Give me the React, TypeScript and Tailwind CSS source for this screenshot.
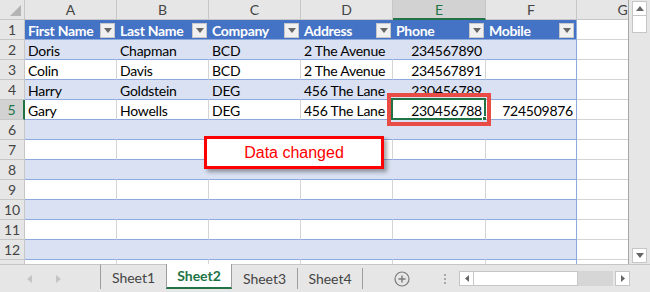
import React from "react";

const font = { fontFamily: "Lato, 'Open Sans', sans-serif" };

const cols = [
  { key: "A", w: "w-[92px]" },
  { key: "B", w: "w-[92px]" },
  { key: "C", w: "w-[92px]" },
  { key: "D", w: "w-[92px]" },
  { key: "E", w: "w-[93px]" },
  { key: "F", w: "w-[91px]" },
  { key: "G", w: "w-[92px]" },
];

const header = ["First Name", "Last Name", "Company", "Address", "Phone", "Mobile"];

const data: string[][] = [
  ["Doris", "Chapman", "BCD", "2 The Avenue", "234567890", ""],
  ["Colin", "Davis", "BCD", "2 The Avenue", "234567891", ""],
  ["Harry", "Goldstein", "DEG", "456 The Lane", "230456789", ""],
  ["Gary", "Howells", "DEG", "456 The Lane", "230456788", "724509876"],
];

const numeric = [4, 5];

function FilterButton() {
  return (
    <span className="ml-auto mr-[2px] flex h-[15px] w-[15px] shrink-0 items-center justify-center border border-[#c8c8c8] bg-[#f0f0f0]">
      <svg width="8" height="5" viewBox="0 0 8 5">
        <path d="M0 0h8L4 5z" fill="#666" />
      </svg>
    </span>
  );
}

function RowHeader({ n, selected }: { n?: number; selected?: boolean }) {
  return (
    <div
      className={
        selected
          ? "flex h-[20px] w-[25px] shrink-0 items-center justify-center border-b border-r-2 border-b-[#c6c6c6] border-r-[#217346] bg-[#d2d2d2] text-[14px] text-[#217346]"
          : "flex h-[20px] w-[25px] shrink-0 items-center justify-center border-b border-r border-[#c6c6c6] bg-[#e6e6e6] text-[14px] text-[#444]"
      }
    >
      {n}
    </div>
  );
}

function TableRow({ n, cells }: { n: number; cells: string[] }) {
  const banded = n % 2 === 0;
  return (
    <div className="flex h-[20px]">
      <RowHeader n={n < 13 ? n : undefined} selected={n === 5} />
      {cols.slice(0, 6).map((c, i) => {
        const last = i === 5;
        const border = last
          ? "border-r-[#8ea9db]"
          : banded
            ? "border-r-[#d9e1f2]"
            : "border-r-[#d4d4d4]";
        return (
          <div
            key={c.key}
            className={`relative flex shrink-0 items-center whitespace-nowrap border-b border-r border-b-[#8ea9db] ${border} ${c.w} ${
              banded ? "bg-[#d9e1f2]" : "bg-white"
            } ${numeric.includes(i) ? "justify-end pr-[3px]" : "pl-[3px]"} pt-[1px] text-[14px] tracking-[-0.25px] text-black`}
          >
            {cells[i] ?? ""}
            {n === 5 && i === 4 && (
              <div className="absolute -left-[2px] -top-[2px] h-[22px] w-[95px] border-2 border-[#217346]">
                <div className="absolute -bottom-[4px] -right-[4px] h-[6px] w-[6px] border border-white bg-[#217346]" />
              </div>
            )}
          </div>
        );
      })}
      <div className="h-[20px] w-[92px] shrink-0 border-b border-r border-[#d4d4d4] bg-white" />
    </div>
  );
}

export default function App() {
  const rows = Array.from({ length: 12 }, (_, i) => i + 2);
  return (
    <div className="relative h-[292px] w-[650px] overflow-hidden bg-[#e6e6e6]" style={font}>
      <div className="flex h-[264px]">
        <div className="h-[264px] w-[629px] shrink-0 overflow-hidden border-r border-[#a6a6a6] bg-white">
          {/* column headers */}
          <div className="flex h-[20px]">
            <div className="relative h-[20px] w-[25px] shrink-0 border-b border-r border-[#c6c6c6] bg-[#e6e6e6]">
              <svg className="absolute bottom-[3px] right-[3px]" width="11" height="11" viewBox="0 0 11 11">
                <path d="M11 0v11H0z" fill="#b4b4b4" />
              </svg>
            </div>
            {cols.map((c) => (
              <div
                key={c.key}
                className={
                  c.key === "E"
                    ? `flex shrink-0 items-center justify-center border-b-2 border-r border-b-[#217346] border-r-[#c6c6c6] bg-[#d2d2d2] text-[14px] text-[#217346] ${c.w}`
                    : `flex shrink-0 items-center justify-center border-b border-r border-[#c6c6c6] bg-[#e6e6e6] text-[14px] text-[#444] ${c.w}`
                }
              >
                {c.key}
              </div>
            ))}
          </div>

          {/* table header row */}
          <div className="flex h-[20px]">
            <RowHeader n={1} />
            {header.map((h, i) => (
              <div
                key={h}
                className={`flex shrink-0 items-center whitespace-nowrap border-b border-[#8ea9db] bg-[#4472c4] pl-[3px] pt-[1px] text-[14px] font-bold tracking-[-0.3px] text-white ${cols[i].w} ${
                  i === 5 ? "border-r" : ""
                }`}
              >
                {h}
                <FilterButton />
              </div>
            ))}
            <div className="h-[20px] w-[92px] shrink-0 border-b border-r border-[#d4d4d4] bg-white" />
          </div>

          {rows.map((n) => (
            <TableRow key={n} n={n} cells={data[n - 2] ?? []} />
          ))}
        </div>

        {/* vertical scrollbar */}
        <div className="flex w-[21px] flex-col items-center justify-between py-[1px] pl-[3px] pr-[3px]">
          <div className="flex flex-col">
            <div className="flex h-[15px] w-[15px] items-center justify-center border border-[#c6c6c6] bg-white">
              <svg width="8" height="5" viewBox="0 0 8 5">
                <path d="M4 0l4 5H0z" fill="#666" />
              </svg>
            </div>
            <div className="h-[17px] w-[15px] border border-t-0 border-[#c6c6c6] bg-white" />
          </div>
          <div className="flex h-[15px] w-[15px] items-center justify-center border border-[#c6c6c6] bg-white">
            <svg width="8" height="5" viewBox="0 0 8 5">
              <path d="M0 0h8L4 5z" fill="#666" />
            </svg>
          </div>
        </div>
      </div>

      {/* sheet tabs */}
      <div className="flex h-[28px] items-start text-[14px]">
        <div className="flex h-[28px] w-[100px] items-center border-t border-[#c6c6c6]">
          <svg className="ml-[27px]" width="5" height="8" viewBox="0 0 5 8">
            <path d="M5 0v8L0 4z" fill="#c4c4c4" />
          </svg>
          <svg className="ml-[24px]" width="5" height="8" viewBox="0 0 5 8">
            <path d="M0 0v8l5-4z" fill="#c4c4c4" />
          </svg>
        </div>
        <div className="flex h-[25px] w-[66px] items-center justify-center border-l border-t border-[#9d9d9d] border-t-[#c6c6c6] text-[#444]">
          Sheet1
        </div>
        <div className="flex h-[25px] w-[66px] items-center justify-center border-b-2 border-l border-r border-[#9d9d9d] border-b-[#217346] bg-white font-bold text-[#217346]">
          Sheet2
        </div>
        <div className="flex h-[28px] w-[65px] items-center justify-center border-t border-[#c6c6c6] text-[#444]">
          Sheet3
        </div>
        <div className="flex h-[28px] items-start border-t border-[#c6c6c6]">
          <div className="mt-[3px] h-[21px] w-px bg-[#9d9d9d]" />
        </div>
        <div className="flex h-[28px] w-[64px] items-center justify-center border-t border-[#c6c6c6] text-[#444]">
          Sheet4
        </div>
        <div className="flex h-[28px] items-start border-t border-[#c6c6c6]">
          <div className="mt-[3px] h-[21px] w-px bg-[#9d9d9d]" />
        </div>
        <div className="flex h-[28px] flex-1 items-center border-t border-[#c6c6c6]">
          <svg className="ml-[31px]" width="16" height="16" viewBox="0 0 16 16">
            <circle cx="8" cy="8" r="7" fill="none" stroke="#7a7a7a" strokeWidth="1.2" />
            <path d="M8 4.5v7M4.5 8h7" stroke="#7a7a7a" strokeWidth="1.4" />
          </svg>
          <div className="ml-[34px] flex flex-col gap-[2px]">
            <span className="h-[2px] w-[2px] bg-[#a8a8a8]" />
            <span className="h-[2px] w-[2px] bg-[#a8a8a8]" />
            <span className="h-[2px] w-[2px] bg-[#a8a8a8]" />
          </div>
          <div className="ml-[13px] flex h-[15px] items-stretch">
            <div className="flex w-[15px] items-center justify-center border border-[#c6c6c6] bg-white">
              <svg width="4" height="7" viewBox="0 0 4 7">
                <path d="M4 0v7L0 3.5z" fill="#666" />
              </svg>
            </div>
            <div className="w-[104px] border border-l-0 border-[#c6c6c6] bg-white" />
            <div className="w-[35px] bg-[#d6d6d6]" />
            <div className="ml-[2px] flex w-[15px] items-center justify-center border border-[#c6c6c6] bg-white">
              <svg width="4" height="7" viewBox="0 0 4 7">
                <path d="M0 0v7l4-3.5z" fill="#666" />
              </svg>
            </div>
          </div>
        </div>
      </div>

      {/* annotations */}
      <div className="absolute left-[387px] top-[93px] h-[33px] w-[104px] border-4 border-[#e84c45]" />
      <div
        className="absolute left-[204px] top-[136px] flex h-[33px] w-[180px] items-center justify-center border-[3px] border-[#ff0000] bg-white text-[16px] text-[#ff0000] shadow-[3px_3px_4px_rgba(0,0,0,0.35)]"
        style={{ fontFamily: "'Liberation Sans', Arial, sans-serif" }}
      >
        Data changed
      </div>
    </div>
  );
}
